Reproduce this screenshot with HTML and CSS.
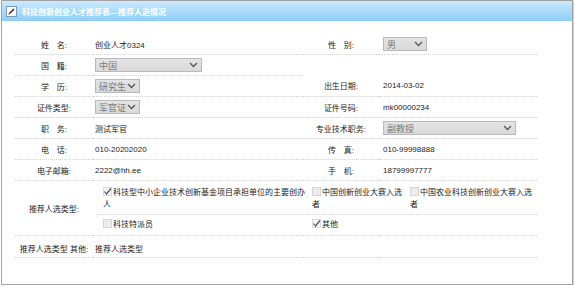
FILE: index.html
```html
<!DOCTYPE html>
<html>
<head>
	<meta charset="UTF-8">
	<title>科技创新创业人才推荐表</title>
	<link rel="stylesheet" href="styles.css">
</head>
<body>
<div class="win">
	<div class="title">
		<svg class="ico" width="11" height="11" viewBox="0 0 11 11">
			<rect x="0.5" y="0.5" width="10" height="10" fill="#fff" stroke="#7d9ab5"/>
			<path d="M3 8 L8 3" stroke="#333" stroke-width="1.6"/>
			<path d="M2.5 8.5 L3.5 7.5" stroke="#888" stroke-width="1"/>
		</svg>
		<span>科技创新创业人才推荐表—推荐人选情况</span>
	</div>
	<table class="form">
		<colgroup>
			<col class="c1"><col class="c2"><col class="c3"><col class="c4">
		</colgroup>
		<tr>
			<td class="lbl">姓　名:</td>
			<td class="val">创业人才0324</td>
			<td class="lbl">性　别:</td>
			<td class="val v4"><span class="sel w44"><b>男</b><svg width="9" height="6" viewBox="0 0 9 6"><path d="M1 1 L4.5 4.5 L8 1" fill="none" stroke="#555" stroke-width="1.3"/></svg></span></td>
		</tr>
		<tr>
			<td class="lbl">国　籍:</td>
			<td class="val"><span class="sel w106"><b>中国</b><svg width="9" height="6" viewBox="0 0 9 6"><path d="M1 1 L4.5 4.5 L8 1" fill="none" stroke="#555" stroke-width="1.3"/></svg></span></td>
			<td class="none"></td>
			<td class="none"></td>
		</tr>
		<tr>
			<td class="lbl">学　历:</td>
			<td class="val"><span class="sel w45"><b>研究生</b><svg width="9" height="6" viewBox="0 0 9 6"><path d="M1 1 L4.5 4.5 L8 1" fill="none" stroke="#555" stroke-width="1.3"/></svg></span></td>
			<td class="lbl">出生日期:</td>
			<td class="val v4">2014-03-02</td>
		</tr>
		<tr>
			<td class="lbl">证件类型:</td>
			<td class="val"><span class="sel w45"><b>军官证</b><svg width="9" height="6" viewBox="0 0 9 6"><path d="M1 1 L4.5 4.5 L8 1" fill="none" stroke="#555" stroke-width="1.3"/></svg></span></td>
			<td class="lbl">证件号码:</td>
			<td class="val v4">mk00000234</td>
		</tr>
		<tr>
			<td class="lbl">职　务:</td>
			<td class="val">测试军官</td>
			<td class="lbl">专业技术职务:</td>
			<td class="val v4"><span class="sel w133"><b>副教授</b><svg width="9" height="6" viewBox="0 0 9 6"><path d="M1 1 L4.5 4.5 L8 1" fill="none" stroke="#555" stroke-width="1.3"/></svg></span></td>
		</tr>
		<tr>
			<td class="lbl">电　话:</td>
			<td class="val">010-20202020</td>
			<td class="lbl">传　真:</td>
			<td class="val v4">010-99998888</td>
		</tr>
		<tr>
			<td class="lbl">电子邮箱:</td>
			<td class="val">2222@hh.ee</td>
			<td class="lbl">手　机:</td>
			<td class="val v4">18799997777</td>
		</tr>
		<tr>
			<td class="lbl">推荐人选类型:</td>
			<td class="checks" colspan="3">
				<div class="crow first">
					<label><svg class="cb" width="9" height="9" viewBox="0 0 9 9"><rect x="0.5" y="0.5" width="8" height="8" fill="#f3f3f3" stroke="#dadada"/><path d="M1.5 4.5 L3.5 7 L8 1.5" fill="none" stroke="#4a5568" stroke-width="1.2"/></svg>科技型中小企业技术创新基金项目承担单位的主要创办人</label>
					<label><svg class="cb" width="9" height="9" viewBox="0 0 9 9"><rect x="0.5" y="0.5" width="8" height="8" fill="#ececec" stroke="#d6d6d6"/></svg>中国创新创业大赛入选者</label>
					<label><svg class="cb" width="9" height="9" viewBox="0 0 9 9"><rect x="0.5" y="0.5" width="8" height="8" fill="#ececec" stroke="#d6d6d6"/></svg>中国农业科技创新创业大赛入选者</label>
				</div>
				<div class="crow">
					<label><svg class="cb" width="9" height="9" viewBox="0 0 9 9"><rect x="0.5" y="0.5" width="8" height="8" fill="#ececec" stroke="#d6d6d6"/></svg>科技特派员</label>
					<label><svg class="cb" width="9" height="9" viewBox="0 0 9 9"><rect x="0.5" y="0.5" width="8" height="8" fill="#f3f3f3" stroke="#dadada"/><path d="M1.5 4.5 L3.5 7 L8 1.5" fill="none" stroke="#4a5568" stroke-width="1.2"/></svg>其他</label>
				</div>
			</td>
		</tr>
		<tr>
			<td class="lbl other">推荐人选类型 其他:</td>
			<td class="val other" colspan="3">推荐人选类型</td>
		</tr>
		<tr class="blank">
			<td colspan="4"></td>
		</tr>
	</table>
</div>
</body>
</html>
```
FILE: styles.css
```css
body{
	margin: 0;
	background: #fff;
	font-family: "Liberation Sans", "Noto Sans CJK SC", sans-serif;
	font-size: 8px;
	color: #222;
}
.win{
	margin: 0 0 0 1px;
	width: 570px;
	height: 283px;
	border: 1px solid #a3a3a3;
	box-shadow: 1px 1px 0 #d0d0d0;
	overflow: hidden;
}
.title{
	height: 20px;
	display: flex;
	align-items: center;
	gap: 5px;
	padding-left: 4px;
	background: linear-gradient(#cae9fc, #8dcff9);
	color: #fff;
	font-size: 8px;
	font-weight: bold;
}
.ico{
	display: block;
}
.form{
	margin: 13px 0 0 13px;
	width: 522px;
	border-collapse: collapse;
	table-layout: fixed;
}
.c1{ width: 78px; }
.c2{ width: 210px; }
.c3{ width: 76px; }
.c4{ width: 158px; }
.form td{
	height: 20px;
	padding: 0;
	border-bottom: 1px dotted #d2d2d2;
	vertical-align: middle;
	white-space: nowrap;
}
.form td.none{
	border-bottom: none;
}
.lbl{
	text-align: center;
}
.val{
	padding-left: 2px !important;
}
.v4{
	padding-left: 4px !important;
}
.sel{
	display: inline-flex;
	align-items: center;
	justify-content: space-between;
	box-sizing: border-box;
	height: 14px;
	padding: 0 3px 0 3px;
	border: 1px solid #b9b9b9;
	background: linear-gradient(#e4e4e4, #d9d9d9);
	vertical-align: middle;
}
.sel b{
	font-weight: normal;
	font-size: 9px;
	color: #7a7a7a;
}
.w44{ width: 44px; }
.w45{ width: 45px; }
.w106{ width: 107px; }
.w133{ width: 133px; }
.form td.checks{
	padding: 0;
	white-space: normal;
}
.crow{
	display: grid;
	grid-template-columns: 209px 98px 130px;
	padding: 4px 0 4px 6px;
	margin-left: 4px;
	line-height: 12px;
}
.crow.first{
	padding-top: 6px;
	padding-bottom: 3px;
	border-bottom: 1px dotted #d2d2d2;
}
.crow label{
	display: block;
	padding-right: 4px;
	white-space: normal;
}
.cb{
	vertical-align: -1px;
	margin-right: 1px;
}
.form td.other{
	height: 12px;
	line-height: 12px;
	padding-top: 8px;
	padding-bottom: 1px;
}
.blank td{
	height: 29px;
}
```
